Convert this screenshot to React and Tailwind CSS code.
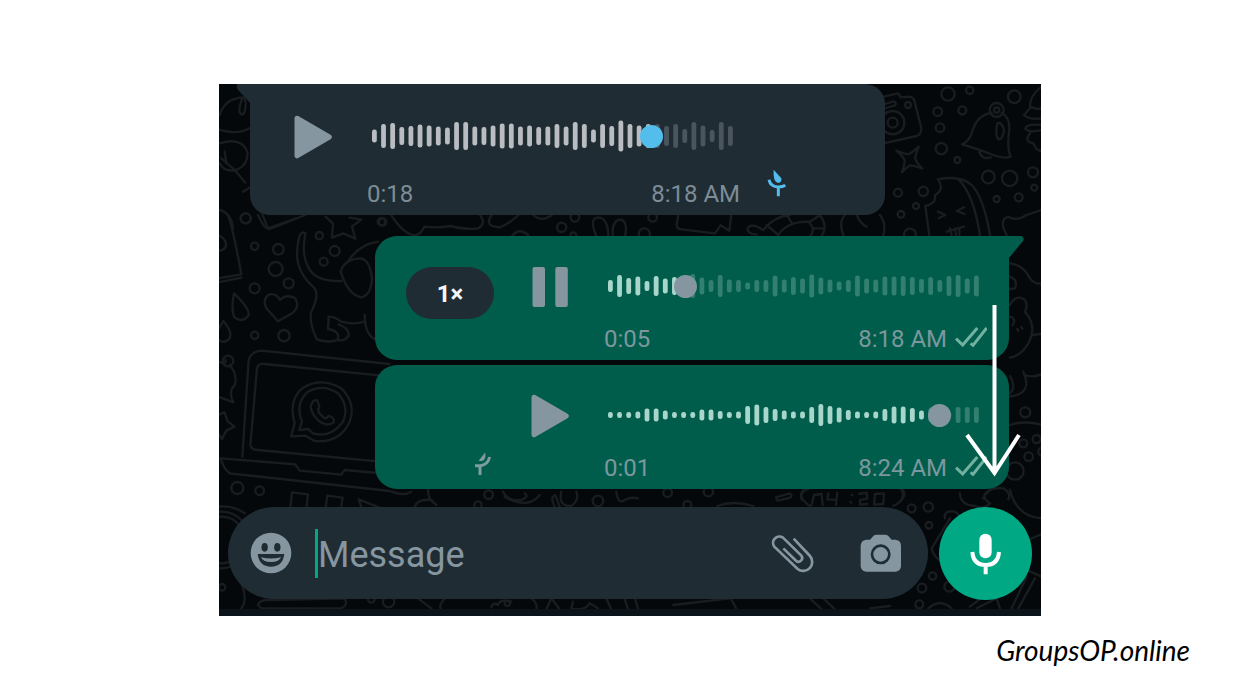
import React from "react";

const WAVE_A = [13, 24, 26, 18, 20, 23, 21, 19, 17, 28, 28, 19, 18, 21, 25, 25, 19, 21, 18, 19, 24, 19, 28, 24, 13, 24, 20, 31, 24, 21, 24, 24, 20, 24, 14, 28, 21, 12, 28, 20];
const WAVE_B = [12, 22, 16, 19, 10, 20, 15, 18, 20, 24, 17, 12, 22, 13, 12, 7, 12, 12, 21, 13, 18, 15, 23, 17, 13, 9, 12, 21, 15, 13, 19, 19, 20, 18, 14, 18, 12, 20, 22, 15, 21];
const WAVE_C = [6, 6, 6, 7, 13, 13, 9, 6, 6, 6, 11, 11, 8, 6, 7, 18, 21, 16, 12, 9, 7, 7, 16, 22, 18, 15, 10, 7, 6, 7, 12, 17, 17, 14, 9, 14, 16, 6, 16, 16, 16];

const PITCH = 9.14;

function Waveform({ bars, value, playedUntil, played, rest, thumb, label }) {
  const width = (bars.length - 1) * PITCH + 5;
  return (
    <div className="relative h-8 w-full">
      <svg className="block h-8 w-full" viewBox={`0 0 ${width} 32`} preserveAspectRatio="none" aria-hidden="true">
        {bars.map((h, i) => (
          <rect key={i} x={i * PITCH} y={16 - h / 2} width="4.8" height={h} rx="2.2" fill={i < playedUntil ? played : rest} />
        ))}
      </svg>
      <input
        type="range"
        min="0"
        max="100"
        step="any"
        defaultValue={value}
        aria-label={label}
        className={`absolute inset-0 m-0 h-8 w-full cursor-pointer appearance-none bg-transparent outline-none [&::-webkit-slider-thumb]:h-[23px] [&::-webkit-slider-thumb]:w-[23px] [&::-webkit-slider-thumb]:appearance-none [&::-webkit-slider-thumb]:rounded-full ${thumb}`}
      />
    </div>
  );
}

function PlayButton({ color }) {
  return (
    <button type="button" aria-label="Play" className="flex h-11 w-[38px] shrink-0 items-center justify-center">
      <svg className="h-11 w-[38px]" viewBox="0 0 38 44">
        <path d="M3 3.2 L35.3 22 L3 40.8 Z" fill={color} stroke={color} strokeWidth="5" strokeLinejoin="round" />
      </svg>
    </button>
  );
}

function PauseButton() {
  return (
    <button type="button" aria-label="Pause" className="flex h-11 w-[38px] shrink-0 items-center justify-center">
      <svg className="h-11 w-[38px]" viewBox="0 0 38 44" fill="#8696a0">
        <rect x="1.5" y="2" width="12.5" height="40" rx="2" />
        <rect x="24.3" y="2" width="12.5" height="40" rx="2" />
      </svg>
    </button>
  );
}

function Ticks() {
  return (
    <svg className="-mt-1 h-5 w-8 shrink-0" viewBox="0 0 96 60" fill="none" stroke="#73b09f" strokeWidth="9" aria-label="Delivered">
      <path d="M3 35 L23 54 L67 3 M47 49 L54 55 L95 3" />
    </svg>
  );
}

function Doodles() {
  return (
    <svg className="absolute inset-0 h-full w-full" viewBox="219 84 822 532" preserveAspectRatio="xMidYMid slice" fill="none" stroke="#191d20" strokeLinecap="round" strokeLinejoin="round" strokeWidth="7" aria-hidden="true">
      <g transform="translate(218 80) scale(.3333)">
        <path d="M5 105 Q20 55 75 52 Q88 60 80 95 Q72 112 64 95 Q65 70 75 52 M5 150 Q60 165 95 145 M5 190 Q70 170 88 215 Q92 250 60 268 Q20 280 5 250 M10 235 L50 270 L82 308 M20 215 L25 250 M75 335 L100 320 L150 445 L235 415" />
        <circle cx="83" cy="415" r="15" />
        <path d="M5 390 Q40 400 45 445" />
      </g>
      <g transform="translate(218 215) scale(.3333)">
        <path d="M30 0 Q45 40 70 178 L0 190 M70 188 L0 202 M0 60 Q25 70 24 92 Q18 110 0 106 M120 0 Q140 45 155 42 L262 0 M323 5 L345 26 L342 68 L376 55 L412 71 L402 34 L430 14 L395 8" />
        <circle cx="83" cy="10" r="15" /><circle cx="110" cy="94" r="11" /><circle cx="181" cy="103" r="16" /><circle cx="173" cy="162" r="21" /><circle cx="212" cy="205" r="15" /><circle cx="110" cy="220" r="15" /><circle cx="304" cy="62" r="11" /><circle cx="350" cy="108" r="15" /><circle cx="317" cy="140" r="12" /><circle cx="490" cy="20" r="11" /><circle cx="110" cy="361" r="11" /><circle cx="198" cy="362" r="17" />
        <path d="M48 235 Q95 280 92 300 Q75 325 50 308 Q38 285 48 235 Z M16 318 Q44 350 35 370 Q20 388 2 375 M16 318 L0 345" />
        <path d="M180 319 L145 280 Q132 250 155 238 Q175 235 186 255 Q205 235 232 250 Q246 275 225 293 Z" />
        <path d="M262 55 Q240 40 237 120 Q240 175 285 215 Q308 235 280 290 Q272 320 296 373 Q330 385 358 375 Q370 350 330 342 L332 305 Q350 305 370 320 Q405 330 440 320 M262 55 Q250 120 270 155 Q290 200 370 198 M368 170 Q380 130 430 130 Q455 135 462 190 Q460 240 430 247 Q390 240 368 170 M390 140 Q420 90 480 80 M440 300 Q440 360 475 375 M362 328 Q395 340 392 362 Q380 380 360 375" />
        <path d="M73 725 L92 435 Q100 408 130 407 L515 447 M97 690 L117 460 Q120 445 140 447 L515 484 M97 690 Q100 705 120 705 L510 742 M8 730 Q15 760 35 775 L515 828 M8 730 L232 748 L245 767 L370 779 L380 765 L480 774" />
        <path d="M219 664 L230 625 Q210 555 255 518 Q310 485 370 520 Q415 565 395 620 Q365 685 290 678 L262 662 Z M244 645 L252 620 Q230 565 270 530 Q315 505 360 535 Q395 575 375 620 Q340 670 285 655 L270 642 Z" />
        <path d="M278 575 Q285 550 298 557 L304 575 Q295 590 310 600 Q322 618 332 603 Q352 608 347 622 Q330 635 308 622 Q280 600 278 575 Z" />
        <path d="M0 440 Q28 450 22 435 M35 450 Q60 480 50 510 Q30 530 46 562 L0 545 M0 600 L20 592 L28 618 L50 635 L25 647 L12 672 L0 655" />
        <circle cx="30" cy="438" r="16" /><circle cx="58" cy="819" r="18" /><circle cx="125" cy="827" r="13" />
        <path d="M217 880 L222 832 L270 838 L265 880 M322 885 L328 842 L374 848 L368 885 M485 878 L422 853 L435 890 M0 875 Q45 870 80 895" />
      </g>
      <g transform="translate(380 210) scale(.3333)">
        <path d="M30 10 Q75 80 110 75 Q125 70 133 50 Q180 55 210 48 Q260 60 295 55 Q320 40 300 15 M335 15 Q310 50 360 52 Q390 40 415 15 M395 80 Q415 50 445 75 M460 15 Q485 38 515 15 M650 80 Q625 25 655 22 Q685 25 685 80 M698 80 Q695 30 722 28 Q745 35 735 80 M895 15 L890 45 Q892 58 905 58 L1005 70 L1022 46 L1048 62 L1054 15 M1150 60 Q1110 35 1102 58 Q1105 72 1130 74 M1150 60 Q1180 20 1230 15 M1160 45 L1195 75 M1220 15 L1235 38 M1195 75 Q1220 35 1285 35 Q1310 60 1290 78 M1290 35 L1320 15 M1298 55 L1330 55 M1320 15 Q1345 50 1325 78 M1395 15 Q1375 35 1390 75 M1430 15 Q1440 40 1460 50 M1500 15 Q1520 40 1510 78" />
        <circle cx="8" cy="36" r="11" /><circle cx="545" cy="52" r="14" /><circle cx="585" cy="22" r="13" /><circle cx="818" cy="22" r="13" /><circle cx="793" cy="72" r="17" /><circle cx="580" cy="76" r="9" />
      </g>
      <g transform="translate(870 80) scale(.3333)">
        <circle cx="234" cy="42" r="20" /><circle cx="299" cy="31" r="11" /><circle cx="433" cy="50" r="19" /><circle cx="203" cy="95" r="13" /><circle cx="277" cy="91" r="12" /><circle cx="210" cy="143" r="13" /><circle cx="214" cy="206" r="17" /><circle cx="262" cy="240" r="9" /><circle cx="355" cy="291" r="19" /><circle cx="419" cy="295" r="23" /><circle cx="489" cy="277" r="15" /><circle cx="493" cy="323" r="9" /><circle cx="446" cy="352" r="12" /><circle cx="380" cy="357" r="9" /><circle cx="160" cy="334" r="14" /><circle cx="84" cy="338" r="12" /><circle cx="138" cy="378" r="9" /><circle cx="93" cy="403" r="10" /><circle cx="120" cy="464" r="18" />
        <circle cx="68" cy="128" r="35" /><circle cx="68" cy="128" r="15" /><circle cx="114" cy="75" r="9" />
        <path d="M40 50 L85 40 L92 52 L120 50 Q130 52 134 65 L154 145 Q155 162 140 168 L40 190 M45 72 L70 64 Q82 68 75 76 L48 84 M79 212 Q110 225 118 222 Q130 215 146 200 Q135 225 136 236 Q140 250 157 266 Q130 256 120 256 Q110 262 96 277 Q105 250 104 240 Q98 228 79 212 Z" />
        <path d="M276 193 Q300 185 310 145 Q325 105 365 98 M395 98 Q425 115 416 165 Q412 210 422 230 Q405 238 370 225 Q320 205 276 193 M328 215 Q335 240 362 232 M382 130 Q395 125 402 150 Q398 180 385 178 Q374 165 382 130" />
        <circle cx="380" cy="90" r="21" /><circle cx="380" cy="90" r="8" />
        <path d="M204 298 Q270 285 305 315 Q340 350 360 465 M265 298 Q310 340 330 465 M204 298 Q225 330 195 345 Q200 370 166 378 L178 465 M204 395 L226 405 L206 415 M282 382 L260 393 L284 402 M230 455 L282 440 M240 445 L245 465 M255 445 L258 465 M268 445 L268 465 M410 465 Q385 420 415 410 Q440 425 470 405 L520 388 M515 20 Q480 45 480 80 Q500 90 515 85 M480 85 L462 105 Q475 120 515 115 M515 135 Q470 130 466 145 Q475 160 515 150 M480 160 Q460 185 490 190 Q500 215 515 212" />
      </g>
      <g transform="translate(690 225) scale(.3333)">
        <path d="M960 115 Q1000 120 1020 160 Q1035 180 1060 175 M960 155 Q985 165 975 190 L960 192 M960 240 Q980 205 1005 225 Q1015 240 1005 260 Q1040 300 1020 345 Q1000 390 960 398 M960 275 Q980 280 968 300 M1030 330 L1060 325 M982 312 L985 318 M994 306 L997 311" />
      </g>
      <g transform="translate(690 360) scale(.3333)">
        <path d="M960 48 Q980 80 960 100 M1000 35 Q1030 100 960 110 M1005 45 Q1030 55 1060 40 M960 195 Q1000 180 1060 195 M335 418 Q325 385 390 380 Q600 375 630 385 Q655 400 635 418 M880 415 Q890 380 940 385 Q965 400 955 418" />
        <circle cx="1006" cy="157" r="15" /><circle cx="1000" cy="250" r="12" /><circle cx="1040" cy="237" r="12" /><circle cx="1016" cy="290" r="13" /><circle cx="975" cy="333" r="26" /><circle cx="1058" cy="275" r="13" />
      </g>
      <g transform="translate(218 490) scale(.3333)">
        <path d="M520 5 Q560 20 580 5 M590 50 Q600 25 640 30 L655 45 M630 0 Q630 30 650 40 M855 5 Q870 35 910 30 Q935 20 920 10 M860 20 Q930 60 965 15 M1010 50 Q995 20 1012 15 L1025 50 M1030 5 Q1020 50 1060 48 Q1085 30 1075 5 M1195 5 Q1200 45 1220 30 Q1240 20 1260 25 M120 345 Q125 330 150 330 L380 325 Q392 345 370 355 L130 355 Z M70 280 Q90 330 70 355 M600 325 L640 355 M680 325 Q660 350 670 358 M820 352 Q825 335 840 345 Q845 325 880 335 M940 325 Q960 340 955 358 M1000 325 L985 358 M1000 325 L1025 358 M1065 335 L1060 355 Q1100 365 1115 340 L1140 355 M1165 325 L1180 358 M1220 325 L1230 358" />
        <circle cx="812" cy="14" r="13" /><circle cx="780" cy="45" r="11" /><circle cx="1140" cy="33" r="16" /><circle cx="512" cy="335" r="17" /><circle cx="868" cy="340" r="8" /><circle cx="12" cy="292" r="10" /><circle cx="460" cy="328" r="10" /><circle cx="10" cy="150" r="85" /><circle cx="10" cy="150" r="70" />
      </g>
      <g transform="translate(630 490) scale(.3333)">
        <path d="M438 22 L480 10 Q490 18 478 24 L442 32 Z M540 48 Q500 20 520 0 M790 48 Q830 30 815 0 M262 48 Q310 30 370 48 M545 45 L552 15 L575 12 L578 45 M595 10 L592 28 L620 30 M622 8 L618 45 M688 12 L710 8 L712 26 L690 30 L690 44 L712 42 M735 12 L732 44 L760 42 L762 10 Z M665 14 L666 16 M662 36 L663 38 M990 10 Q990 45 1035 48 Q1060 60 1080 40 Q1050 20 1075 5 M1140 0 Q1160 80 1235 85 M945 85 Q940 60 975 65 Q1000 80 975 95 M960 85 L905 175 Q910 200 935 215 M1195 150 L1240 130 M1200 180 Q1180 200 1190 240 L1235 260 M1190 260 L1145 355 M1215 265 L1165 355 M1020 350 L1060 320 M1040 355 L1100 325 L1110 355 M895 355 Q930 325 965 355 M130 345 L300 325 M15 325 L25 358 M305 330 L320 358 M540 325 L575 358 M580 325 L615 358 M720 355 L780 348" />
        <circle cx="845" cy="55" r="12" /><circle cx="895" cy="51" r="14" /><circle cx="897" cy="106" r="10" /><circle cx="908" cy="258" r="11" /><circle cx="876" cy="294" r="13" /><circle cx="868" cy="343" r="12" /><circle cx="958" cy="290" r="15" /><circle cx="113" cy="8" r="13" /><circle cx="172" cy="45" r="12" /><circle cx="235" cy="5" r="14" />
      </g>
    </svg>
  );
}

function ReceivedMessage() {
  return (
    <article className="relative ml-[31px] flex h-[131px] max-w-[635px] items-start rounded-b-[20px] rounded-tr-[20px] bg-[#1f2c34] pl-11 pt-[31px]">
      <svg className="absolute -left-[15px] top-0 h-5 w-4" viewBox="0 0 16 20" fill="#1f2c34" aria-hidden="true">
        <path d="M0 0 H16 V20 L4 7 Q1 4 2 0 Z" />
      </svg>
      <PlayButton color="#8696a0" />
      <div className="ml-[35px] w-[373px]">
        <div className="flex h-[42px] items-center pl-[5px] pr-[7px]">
          <Waveform bars={WAVE_A} value={79.4} playedUntil={31} played="#b9bdc1" rest="#4a555e" thumb="[&::-webkit-slider-thumb]:bg-[#53bdeb]" label="Voice message position, 0:18" />
        </div>
        <div className="mt-[23px] flex justify-between text-2xl leading-7 text-[#7d8c96]">
          <span>0:18</span>
          <time>8:18 AM</time>
        </div>
      </div>
      <svg className="ml-[27px] mt-[54px] h-7 w-5" viewBox="651 266 60 84" fill="none" stroke="#53bdeb" strokeWidth="9" aria-label="Played">
        <path d="M671 268 L694 294 Q696 309 682 307 Q669 303 671 268 Z" fill="#53bdeb" stroke="none" />
        <path d="M657 298 Q661 319 686 320 Q698 320 706 315 M685 320 V348" />
      </svg>
    </article>
  );
}

function SentMessage({ lead, control, children, duration, time, tail }) {
  return (
    <article className={`relative ml-auto mr-8 flex h-[124px] w-full max-w-[634px] items-start bg-[#005d4b] pl-[31px] pr-[22px] pt-[29px] ${tail ? "rounded-b-[22px] rounded-tl-[22px]" : "rounded-[22px]"}`}>
      {tail && (
        <svg className="absolute -right-[15px] top-0 h-6 w-4" viewBox="0 0 16 24" fill="#005d4b" aria-hidden="true">
          <path d="M0 0 H13 Q17 1 15 5 L1 22 H0 Z" />
        </svg>
      )}
      <div className="flex w-[88px] shrink-0 justify-center">{lead}</div>
      <div className="ml-[37px]">{control}</div>
      <div className="ml-[35px] min-w-0 flex-1">
        <div className="flex h-[42px] items-center pl-1 pr-2">{children}</div>
        <div className="mt-[18px] flex items-center text-2xl leading-7 text-[#7c979d]">
          <span className="mr-auto">{duration}</span>
          <time className="mr-2">{time}</time>
          <Ticks />
        </div>
      </div>
    </article>
  );
}

function Composer() {
  return (
    <form className="relative mx-[9px] mt-[18px] flex items-start gap-[11px]" onSubmit={(e) => e.preventDefault()}>
      <div className="flex h-[92px] min-w-0 flex-1 items-center rounded-full bg-[#1f2c34] pl-[22px] pr-[26px]">
        <button type="button" aria-label="Emoji" className="shrink-0">
          <svg className="h-[42px] w-[42px]" viewBox="0 0 126 126">
            <circle cx="63" cy="63" r="61" fill="#8696a0" />
            <ellipse cx="44" cy="46" rx="9.5" ry="13" fill="#1f2c34" />
            <ellipse cx="82" cy="46" rx="9.5" ry="13" fill="#1f2c34" />
            <path d="M23 66 H103 Q98 104 63 104 Q28 104 23 66 Z" fill="#1f2c34" />
            <path d="M33 76 Q63 83 93 76 Q88 90 63 90 Q38 90 33 76 Z" fill="#8696a0" />
          </svg>
        </button>
        <input type="text" aria-label="Message" placeholder="Message" className="ml-[23px] h-[49px] min-w-0 flex-1 border-l-[3px] border-[#00a884] bg-transparent p-0 pt-[3px] text-4xl text-[#e9edef] outline-none placeholder:text-[#8696a0]" />
        <button type="button" aria-label="Attach" className="shrink-0">
          <svg className="h-10 w-11" viewBox="0 0 132 120" fill="none" stroke="#8696a0" strokeWidth="8">
            <path d="M71 17 L120 69 A27 27 0 0 1 83 108 L13 41 A19 19 0 0 1 39 14 L94 68 A11 11 0 0 1 78 83 L40 46" />
          </svg>
        </button>
        <button type="button" aria-label="Camera" className="ml-[46px] shrink-0">
          <svg className="h-10 w-[42px]" viewBox="0 0 126 120">
            <path d="M18 20 H30 L40 9 Q44 5 50 5 H75 Q81 5 85 9 L95 20 H107 Q123 22 123 38 V100 Q122 115 107 116 H18 Q3 115 2 100 V38 Q3 22 18 20 Z" fill="#8696a0" />
            <circle cx="62" cy="64" r="26" fill="none" stroke="#1f2c34" strokeWidth="8" />
          </svg>
        </button>
      </div>
      <button type="button" aria-label="Record voice message" className="flex h-[93px] w-[93px] shrink-0 items-center justify-center rounded-full bg-[#00a884]">
        <svg className="h-[42px] w-8" viewBox="0 0 96 126" fill="none" stroke="#fff" strokeWidth="12">
          <rect x="28" y="2" width="37" height="74" rx="18" fill="#fff" stroke="none" />
          <path d="M7 57 Q10 96 47 96 Q84 96 87 57 M47 96 V124" />
        </svg>
      </button>
    </form>
  );
}

export default function App() {
  return (
    <main className="min-h-screen bg-white px-4 pt-[84px] font-[Roboto,sans-serif]">
      <section className="relative mx-auto w-full max-w-[822px] overflow-hidden bg-[#04080b]">
        <Doodles />
        <ReceivedMessage />
        <div className="mt-[21px]">
          <SentMessage
            tail
            duration="0:05"
            time="8:18 AM"
            control={<PauseButton />}
            lead={
              <button type="button" aria-label="Playback speed 1×" className="mt-0.5 h-[52px] w-[88px] rounded-full bg-[#1f2c34] pt-0.5 text-2xl font-bold text-[#f3f5f6]">
                1×
              </button>
            }
          >
            <Waveform bars={WAVE_B} value={19.1} playedUntil={8} played="#a9d6cb" rest="#337f70" thumb="[&::-webkit-slider-thumb]:bg-[#8696a0]" label="Voice message position, 0:05" />
          </SentMessage>
        </div>
        <div className="mt-[5px]">
          <SentMessage
            duration="0:01"
            time="8:24 AM"
            control={<PlayButton color="#8696a0" />}
            lead={
              <svg className="ml-[66px] mt-[58px] h-6 w-[18px]" viewBox="313 278 54 72" fill="none" stroke="#7f9da0" strokeWidth="9" aria-label="Not played">
                <path d="M347 279 L327 304 Q344 309 347 292 Z" fill="#7f9da0" stroke="none" />
                <path d="M360 293 Q355 316 332 319 H316 M331 320 V347" />
              </svg>
            }
          >
            <Waveform bars={WAVE_C} value={92} playedUntil={35} played="#a9d6cb" rest="#337f70" thumb="[&::-webkit-slider-thumb]:bg-[#8696a0]" label="Voice message position, 0:01" />
          </SentMessage>
        </div>
        <Composer />
        <div className="relative mt-[9px] h-[7px] bg-[#0b141b]" />
        <svg className="pointer-events-none absolute right-5 top-[221px] h-[172px] w-14" viewBox="0 0 56 172" fill="none" stroke="#fff" strokeWidth="4" aria-hidden="true">
          <path d="M29.5 0 V168 M2 130 L29.5 168 L54 130" />
        </svg>
      </section>
      <footer className="mr-[54px] mt-3 text-right font-[Lato,sans-serif] text-[28px] italic leading-[44px] text-black">GroupsOP.online</footer>
    </main>
  );
}
